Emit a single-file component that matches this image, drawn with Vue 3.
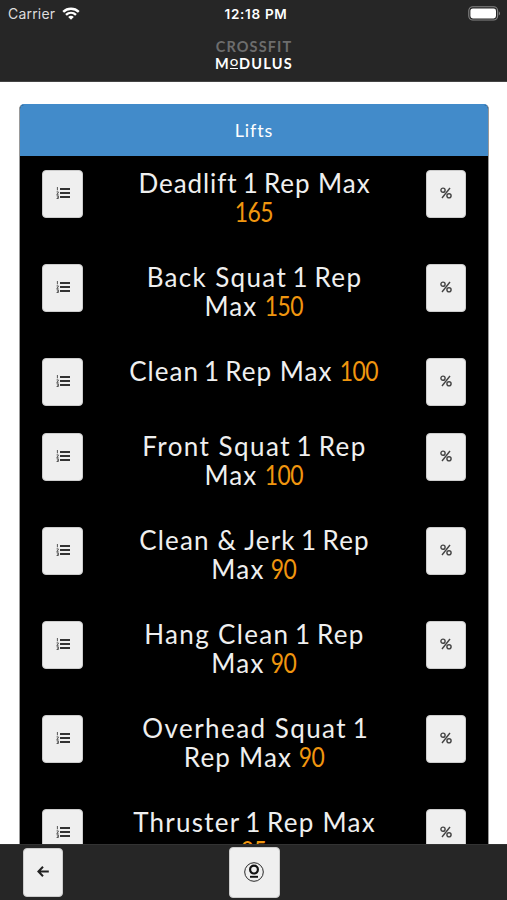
<template>
  <div class="screen">
    <header class="topbar">
      <div class="status">
        <div class="status__left">
          <span class="status__carrier">Carrier</span>
          <svg class="status__wifi" width="18" height="13" viewBox="0 0 18 13" fill="none" stroke="#fff" stroke-width="2.4">
            <path d="M1.2 4.9C5.6 .7 12.4 .7 16.8 4.9"></path>
            <path d="M4 7.9c2.9-2.7 7.1-2.7 10 0"></path>
            <path d="M9 12.8 6.2 9.9c1.6-1.4 4-1.4 5.6 0z" fill="#fff" stroke="none"></path>
          </svg>
        </div>
        <span class="status__time">12:18 PM</span>
        <div class="status__right">
          <svg width="33" height="15" viewBox="0 0 33 15">
            <rect x=".8" y=".8" width="28.8" height="13.2" rx="4" fill="none" stroke="#858585" stroke-width="1.1"></rect>
            <rect x="2.4" y="2.4" width="25.6" height="10" rx="2.4" fill="#fff"></rect>
            <path d="M30.8 5.2c1.6.8 1.6 3.6 0 4.4z" fill="#858585"></path>
          </svg>
        </div>
      </div>
      <div class="brand">
        <div class="brand__top">CROSSFIT</div>
        <div class="brand__name">M<span class="brand__o">O</span>DULUS</div>
      </div>
    </header>

    <main class="content">
      <section class="panel">
        <div class="panel__heading">Lifts</div>
        <div class="panel__body">
          <div v-for="lift in lifts" :key="lift.id" class="lift">
            <button class="btn btn--list" aria-label="History">
              <svg width="14" height="12" viewBox="0 0 14 12">
                <path d="M4 2h10M4 6h10M4 10h10" stroke="#333" stroke-width="1.9"></path>
                <path d="M1.4 0v3.3M.6 4.9h1.7v1L.7 7.3h1.8M.6 8.8h1.8v2.7H.6M1 10.1h1.3" fill="none" stroke="#555" stroke-width="1"></path>
              </svg>
            </button>
            <h3 class="lift__title">
              <span v-for="(line, i) in lift.lines" :key="i" class="lift__line" :style="{ letterSpacing: line.spacing + 'px' }">
                <template v-for="(word, w) in line.words" :key="w"><span :class="{ lift__one: word === '1' }">{{ word }}</span>{{ ' ' }}</template>
                <span v-if="line.value" class="lift__value">{{ line.value }}</span>
              </span>
            </h3>
            <button class="btn btn--percent" aria-label="Percentages">
              <svg width="12" height="12" viewBox="0 0 12 12" fill="none" stroke="#444" stroke-width="1.4">
                <circle cx="3" cy="3.2" r="2.1"></circle>
                <circle cx="9" cy="8.8" r="2.1"></circle>
                <path d="M10 1 2 11"></path>
              </svg>
            </button>
          </div>
        </div>
      </section>
    </main>

    <footer class="bottombar">
      <button class="btn btn--back" aria-label="Back">
        <svg width="12" height="11" viewBox="0 0 12 11" fill="none" stroke="#222" stroke-width="2">
          <path d="M11.8 5.5H1.6M6 .7 1.4 5.5 6 10.3"></path>
        </svg>
      </button>
      <button class="btn btn--home" aria-label="Home">
        <svg width="20" height="20" viewBox="0 0 20 20" fill="none" stroke="#111">
          <circle cx="10" cy="10" r="9.3" stroke-width=".9"></circle>
          <circle cx="10" cy="7.6" r="3.9" stroke-width="2.2"></circle>
          <path d="M6 14.8h8" stroke-width="1.9"></path>
        </svg>
      </button>
    </footer>
  </div>
</template>

<script setup>
const lifts = [
  { id: 1, lines: [{ words: ['Deadlift', '1', 'Rep', 'Max'], spacing: 0.95 }, { words: [], value: 165, spacing: 0 }] },
  { id: 2, lines: [{ words: ['Back', 'Squat', '1', 'Rep'], spacing: 1.35 }, { words: ['Max'], value: 150, spacing: 1 }] },
  { id: 3, lines: [{ words: ['Clean', '1', 'Rep', 'Max'], value: 100, spacing: 1 }] },
  { id: 4, lines: [{ words: ['Front', 'Squat', '1', 'Rep'], spacing: 1.45 }, { words: ['Max'], value: 100, spacing: 1 }] },
  { id: 5, lines: [{ words: ['Clean', '&', 'Jerk', '1', 'Rep'], spacing: 1.15 }, { words: ['Max'], value: 90, spacing: 1.2 }] },
  { id: 6, lines: [{ words: ['Hang', 'Clean', '1', 'Rep'], spacing: 1.35 }, { words: ['Max'], value: 90, spacing: 1.2 }] },
  { id: 7, lines: [{ words: ['Overhead', 'Squat', '1'], spacing: 1.45 }, { words: ['Rep', 'Max'], value: 90, spacing: 1.2 }] },
  { id: 8, lines: [{ words: ['Thruster', '1', 'Rep', 'Max'], spacing: 1.25 }, { words: [], value: 85, spacing: 0 }] }
];
</script>

<style>
body {
  margin: 0;
  background: #fff;
}
</style>

<style scoped>
* {
  box-sizing: border-box;
}

.screen {
  display: flex;
  flex-direction: column;
  height: 900px;
  overflow: hidden;
  background: #fff;
  font-family: Lato, "Open Sans", sans-serif;
}

.topbar {
  flex: none;
  height: 82px;
  background: #262626;
  border-bottom: 1px solid #444;
  color: #fff;
}

.status {
  display: grid;
  grid-template-columns: 1fr auto 1fr;
  align-items: center;
  height: 27px;
  padding: 0 6px 0 8px;
  font-family: Inter, sans-serif;
  font-size: 14px;
}

.status__left {
  display: flex;
  align-items: center;
  gap: 7px;
  color: #ddd;
}

.status__carrier {
  letter-spacing: 0.2px;
}

.status__time {
  padding-left: 3px;
  font-size: 13.5px;
  font-weight: 600;
  letter-spacing: 0.7px;
}

.status__right {
  display: flex;
  justify-content: flex-end;
}

.brand {
  padding: 11px 0 0 1px;
  font-size: 14.5px;
  line-height: 17px;
  font-weight: 700;
  text-align: center;
}

.brand__top {
  height: 17px;
  color: #6d6d6d;
  letter-spacing: 1.1px;
}

.brand__name {
  height: 17px;
  letter-spacing: 1.2px;
}

.brand__o {
  display: inline-block;
  height: 11px;
  margin-right: 1px;
  border-bottom: 1px solid #fff;
  font-size: 10px;
  line-height: 8px;
  letter-spacing: 0;
  vertical-align: top;
  margin-top: 3px;
}

.content {
  flex: 1;
  min-height: 0;
  overflow: hidden;
  padding: 22px 18px 0 19px;
}

.panel {
  border: 1px solid #999;
  border-top-color: #428bca;
  border-radius: 5px 5px 0 0;
  background: #000;
  overflow: hidden;
}

.panel__heading {
  height: 51px;
  background: #428bca;
  color: #fff;
  font-size: 18px;
  line-height: 51px;
  letter-spacing: 0.9px;
  text-align: center;
}

.panel__body {
  padding: 14px 22px 0;
}

.lift {
  display: flex;
  justify-content: space-between;
  align-items: flex-start;
  padding-bottom: 26.4px;
}

.lift:has(.lift__line + .lift__line) {
  padding-bottom: 37.1px;
}

.lift__title {
  margin: -1px 0 0;
  color: #efefef;
  font-size: 26px;
  font-weight: 400;
  line-height: 29px;
  text-align: center;
}

.lift__line {
  display: block;
  white-space: nowrap;
}

.lift__one {
  margin: 0 -2.5px;
}

.lift__value {
  display: inline-block;
  margin: 0 -1px 0 -3px;
  color: #f0960f;
  letter-spacing: -0.5px;
  transform: scaleX(0.88);
}

.btn {
  display: flex;
  align-items: center;
  justify-content: center;
  flex: none;
  height: 48px;
  padding: 0 0 2px;
  border: 1px solid #ccc;
  border-radius: 4px;
  background: #efefef;
}

.btn--list {
  width: 41px;
}

.btn--percent {
  width: 40px;
}

.bottombar {
  display: grid;
  grid-template-columns: 1fr auto 1fr;
  flex: none;
  height: 56px;
  padding: 2px 23px 0;
  background: #262626;
  border-top: 1px solid #333;
}

.btn--back {
  width: 40px;
  height: 49px;
  margin-top: 1px;
  padding-bottom: 3px;
}

.btn--home {
  width: 51px;
  height: 51px;
  margin-left: 1px;
}
</style>
